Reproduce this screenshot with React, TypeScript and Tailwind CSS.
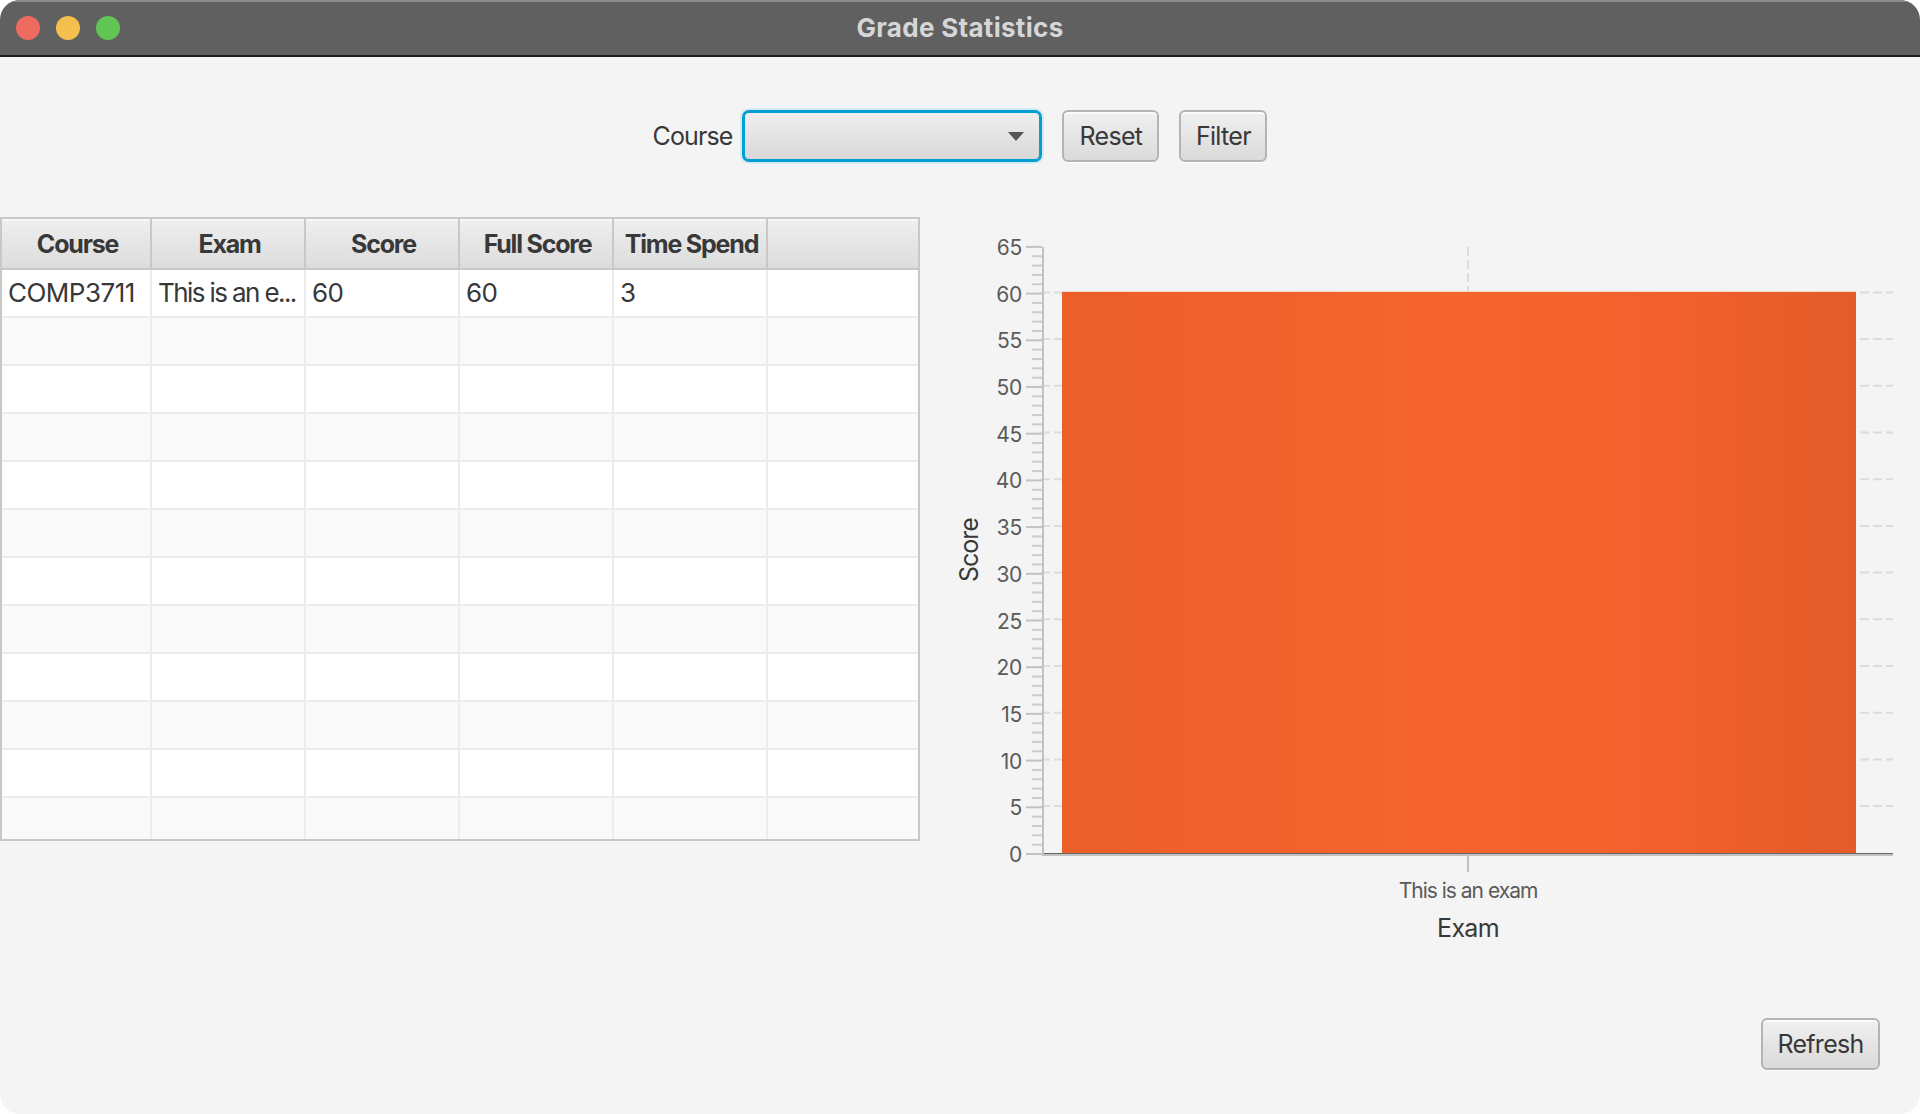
const columns = ["Course", "Exam", "Score", "Full Score", "Time Spend", ""];
const firstRow = ["COMP3711", "This is an e...", "60", "60", "3", ""];
const rowHeights = [48, 48, 48, 48, 48, 48, 48, 48, 48, 48, 48, 41];

const gridDash = "9 4";
const scale = (v: number) => 637 - v * 9.34;

const Button = ({ label, width }: { label: string; width: string }) => (
  <button
    className={`${width} h-[52px] rounded-[6px] border-2 border-[#b4b4b4] bg-gradient-to-b from-[#f0f0f0] to-[#dadada] pt-[2px] text-[25px] tracking-[-0.7px] text-[#383838] shadow-[inset_0_2px_0_#fbfbfb,0_1px_0_#ffffff]`}
  >
    {label}
  </button>
);

const Toolbar = () => (
  <div className="flex items-center justify-center pt-[53px]">
    <span className="pt-[2px] text-[25px] tracking-[-0.9px] text-[#383838]">Course</span>
    <div className="relative ml-[10px] flex h-[52px] w-[300px] items-center justify-end rounded-[7px] border-[3px] border-[#039ed3] bg-gradient-to-b from-[#efefef] to-[#d8d8d8] pr-[15px] shadow-[0_0_0_2px_#d5eaf2]">
      <div className="h-0 w-0 border-x-[8px] border-t-[9px] border-x-transparent border-t-[#555555]" />
    </div>
    <div className="ml-[20px]">
      <Button label="Reset" width="w-[97px]" />
    </div>
    <div className="ml-[20px]">
      <Button label="Filter" width="w-[88px]" />
    </div>
  </div>
);

const Table = () => (
  <div className="flex w-[920px] flex-col border-2 border-[#c8c8c8] bg-white">
    <div className="flex h-[51px] border-b-2 border-[#c8c8c8]">
      {columns.map((c, i) => (
        <div
          key={i}
          className={`flex items-center justify-center bg-gradient-to-b from-[#efefef] to-[#dcdcdc] pt-[2px] pl-[3px] text-[25px] font-bold tracking-[-1.2px] text-[#383838] shadow-[inset_0_2px_0_#f6f6f6] ${
            i === 0 ? "w-[150px]" : i < 5 ? "w-[154px]" : "flex-1"
          } ${i < 5 ? "border-r-2 border-[#c8c8c8]" : ""}`}
        >
          {c}
        </div>
      ))}
    </div>
    {rowHeights.map((h, r) => (
      <div
        key={r}
        className={`flex ${h === 48 ? "h-[48px]" : "h-[41px]"} ${r % 2 === 0 ? "bg-white" : "bg-[#f9f9f9]"} ${
          r < 11 ? "border-b-2 border-[#ececec]" : ""
        }`}
      >
        {columns.map((_, i) => (
          <div
            key={i}
            className={`flex items-center pb-[2px] pl-[6px] text-[26px] whitespace-nowrap text-[#383838] ${
              i === 1 ? "tracking-[-1.6px]" : "tracking-[-0.5px]"
            } ${i === 0 ? "w-[150px]" : i < 5 ? "w-[154px]" : "flex-1"} ${i < 5 ? "border-r-2 border-[#ececec]" : ""}`}
          >
            {r === 0 ? firstRow[i] : ""}
          </div>
        ))}
      </div>
    ))}
  </div>
);

const Chart = () => {
  const majors = Array.from({ length: 14 }, (_, i) => i * 5);
  const minors = Array.from({ length: 66 }, (_, i) => i).filter((v) => v % 5 !== 0);
  return (
    <svg width="980" height="743" viewBox="940 217 980 743" className="block">
      <defs>
        <linearGradient id="bar" x1="0" x2="1" y1="0" y2="0">
          <stop offset="0" stopColor="#ea5f2a" />
          <stop offset="0.2" stopColor="#f0602c" />
          <stop offset="0.5" stopColor="#f5652c" />
          <stop offset="0.75" stopColor="#f3602d" />
          <stop offset="0.87" stopColor="#ea5e2a" />
          <stop offset="1" stopColor="#e35c29" />
        </linearGradient>
      </defs>
      {majors.slice(1, 13).map((v) => (
        <line
          key={v}
          x1="1041"
          x2="1893"
          y1={scale(v) + 217 - 1.2}
          y2={scale(v) + 217 - 1.2}
          stroke="#dcdcdc"
          strokeWidth="2"
          strokeDasharray={gridDash}
        />
      ))}
      <line x1="1468" x2="1468" y1="247" y2="292" stroke="#dcdcdc" strokeWidth="2" strokeDasharray={gridDash} />
      <rect x="1062" y="291" width="794" height="1" fill="#f3d9cd" />
      <rect x="1062" y="292" width="794" height="561" fill="url(#bar)" />
      {minors.map((v) => (
        <rect key={v} x="1032" y={scale(v) + 217 - 1} width="10" height="2" fill="#cccccc" />
      ))}
      {majors.map((v) => (
        <g key={v}>
          <rect x="1026" y={scale(v) + 217 - 1} width="16" height="2" fill="#c2c2c2" />
          <text
            x="1022"
            y={scale(v) + 217 + 8}
            textAnchor="end"
            fontSize="21"
            letterSpacing="-0.3"
            fill="#5a5a5a"
          >
            {v}
          </text>
        </g>
      ))}
      <rect x="1042" y="247" width="2" height="609" fill="#c2c2c2" />
      <rect x="1044" y="853" width="849" height="1" fill="#666666" />
      <rect x="1044" y="854" width="849" height="2" fill="#c2c2c2" />
      <rect x="1467" y="856" width="2" height="16" fill="#c2c2c2" />
      <text x="1468" y="898" textAnchor="middle" fontSize="21" letterSpacing="-1" fill="#5a5a5a">
        This is an exam
      </text>
      <text x="1468" y="937" textAnchor="middle" fontSize="25" letterSpacing="-0.7" fill="#383838">
        Exam
      </text>
      <text
        x="969"
        y="550"
        textAnchor="middle"
        fontSize="25"
        letterSpacing="-1"
        fill="#383838"
        transform="rotate(-90 969 550) translate(0 9)"
      >
        Score
      </text>
    </svg>
  );
};

export default function App() {
  return (
    <div className="h-[1114px] w-full bg-white font-['Inter',sans-serif]">
      <div className="flex h-full flex-col overflow-hidden rounded-[20px] bg-[#f4f4f4]">
        <div className="relative flex h-[57px] shrink-0 items-center justify-center border-b-2 border-[#1e1e1e] bg-[#606060] shadow-[inset_0_2px_0_#8a8a8a]">
          <div className="absolute left-[16px] top-[16px] flex gap-[16px]">
            <div className="h-[24px] w-[24px] rounded-full bg-[#ee6a5f]" />
            <div className="h-[24px] w-[24px] rounded-full bg-[#f5bf4f]" />
            <div className="h-[24px] w-[24px] rounded-full bg-[#61c554]" />
          </div>
          <span className="text-[26px] font-bold tracking-[0.3px] text-[#d6d6d6]">Grade Statistics</span>
        </div>
        <Toolbar />
        <div className="mt-[55px] flex items-start">
          <Table />
          <div className="ml-[20px]">
            <Chart />
          </div>
        </div>
        <div className="mt-[58px] flex justify-end pr-[40px]">
          <Button label="Refresh" width="w-[119px]" />
        </div>
      </div>
    </div>
  );
}
